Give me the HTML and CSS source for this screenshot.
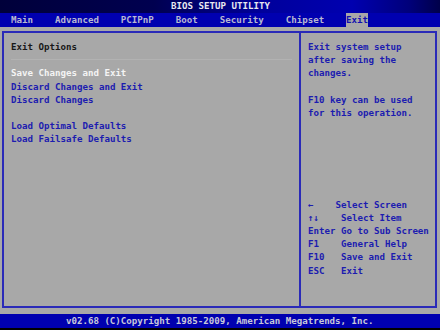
FILE: index.html
```html
<!DOCTYPE html>
<html>
<head>
<meta charset="utf-8">
<title>BIOS SETUP UTILITY</title>
<link rel="stylesheet" href="styles.css">
</head>
<body>
<div class="screen">
  <header class="title">BIOS SETUP UTILITY</header>
  <nav class="menu">
    <span class="tab">Main</span>
    <span class="tab">Advanced</span>
    <span class="tab">PCIPnP</span>
    <span class="tab">Boot</span>
    <span class="tab">Security</span>
    <span class="tab">Chipset</span>
    <span class="tab active">Exit</span>
  </nav>
  <main class="content">
    <div class="box">
      <section class="left">
        <div class="heading">Exit Options</div>
        <div class="sep"></div>
        <ul class="items">
          <li class="item selected">Save Changes and Exit</li>
          <li class="item">Discard Changes and Exit</li>
          <li class="item">Discard Changes</li>
          <li class="item blank"></li>
          <li class="item">Load Optimal Defaults</li>
          <li class="item">Load Failsafe Defaults</li>
        </ul>
      </section>
      <aside class="right">
        <div class="help">Exit system setup
after saving the
changes.

F10 key can be used
for this operation.</div>
        <div class="keys">←    Select Screen
↑↓    Select Item
Enter Go to Sub Screen
F1    General Help
F10   Save and Exit
ESC   Exit</div>
      </aside>
    </div>
  </main>
  <footer class="footer">v02.68 (C)Copyright 1985-2009, American Megatrends, Inc.</footer>
</div>
</body>
</html>
```
FILE: styles.css
```css
* { box-sizing: border-box; }
html, body { margin: 0; padding: 0; }
body {
  width: 440px;
  height: 330px;
  background: #000;
  overflow: hidden;
  font-family: "DejaVu Sans Mono", "Liberation Mono", monospace;
  font-size: 9.14px;
  font-weight: bold;
  line-height: 13.2px;
}
.screen {
  width: 440px;
  height: 330px;
  display: flex;
  flex-direction: column;
  background: #a8a8a8;
}
.title {
  height: 13px;
  line-height: 13px;
  text-align: center;
  color: #e8e8f0;
  padding-left: 1px;
  background: linear-gradient(90deg, #00003a 0%, #000050 35%, #00009c 60%, #0000b0 80%, #00007a 93%, #00004a 100%);
}
.menu {
  height: 14px;
  line-height: 14px;
  background: #0000b0;
  display: flex;
  gap: 4ch;
  padding-left: 2ch;
  color: #b8b8d0;
}
.tab { display: block; }
.tab.active {
  background: #a8a8a8;
  color: #1010b0;
}
.content {
  flex: 1;
  padding: 4px 3px 6px 2px;
  display: flex;
}
.box {
  flex: 1;
  border: 2px solid #2a2ab8;
  display: grid;
  grid-template-columns: 297px 1fr;
}
.left {
  border-right: 2px solid #2a2ab8;
  padding: 8px 7px 0 7px;
}
.heading {
  color: #181818;
  height: 13.2px;
}
.sep {
  height: 1px;
  margin: 5px 0 7.2px 0;
  background: #b2b2b2;
}
.items {
  list-style: none;
  margin: 0;
  padding: 0;
}
.item {
  height: 13.2px;
  color: #1c1cb0;
}
.item.selected { color: #f4f4f4; }
.right {
  padding: 8px 4px 0 7px;
  display: flex;
  flex-direction: column;
}
.help, .keys {
  white-space: pre;
  color: #1c1cb0;
}
.keys {
  margin-top: 78.4px;
}
.footer {
  height: 16px;
  line-height: 14px;
  background: #0000b0;
  border-bottom: 2px solid #000;
  color: #c8c8d8;
  padding-left: 12ch;
}
```
